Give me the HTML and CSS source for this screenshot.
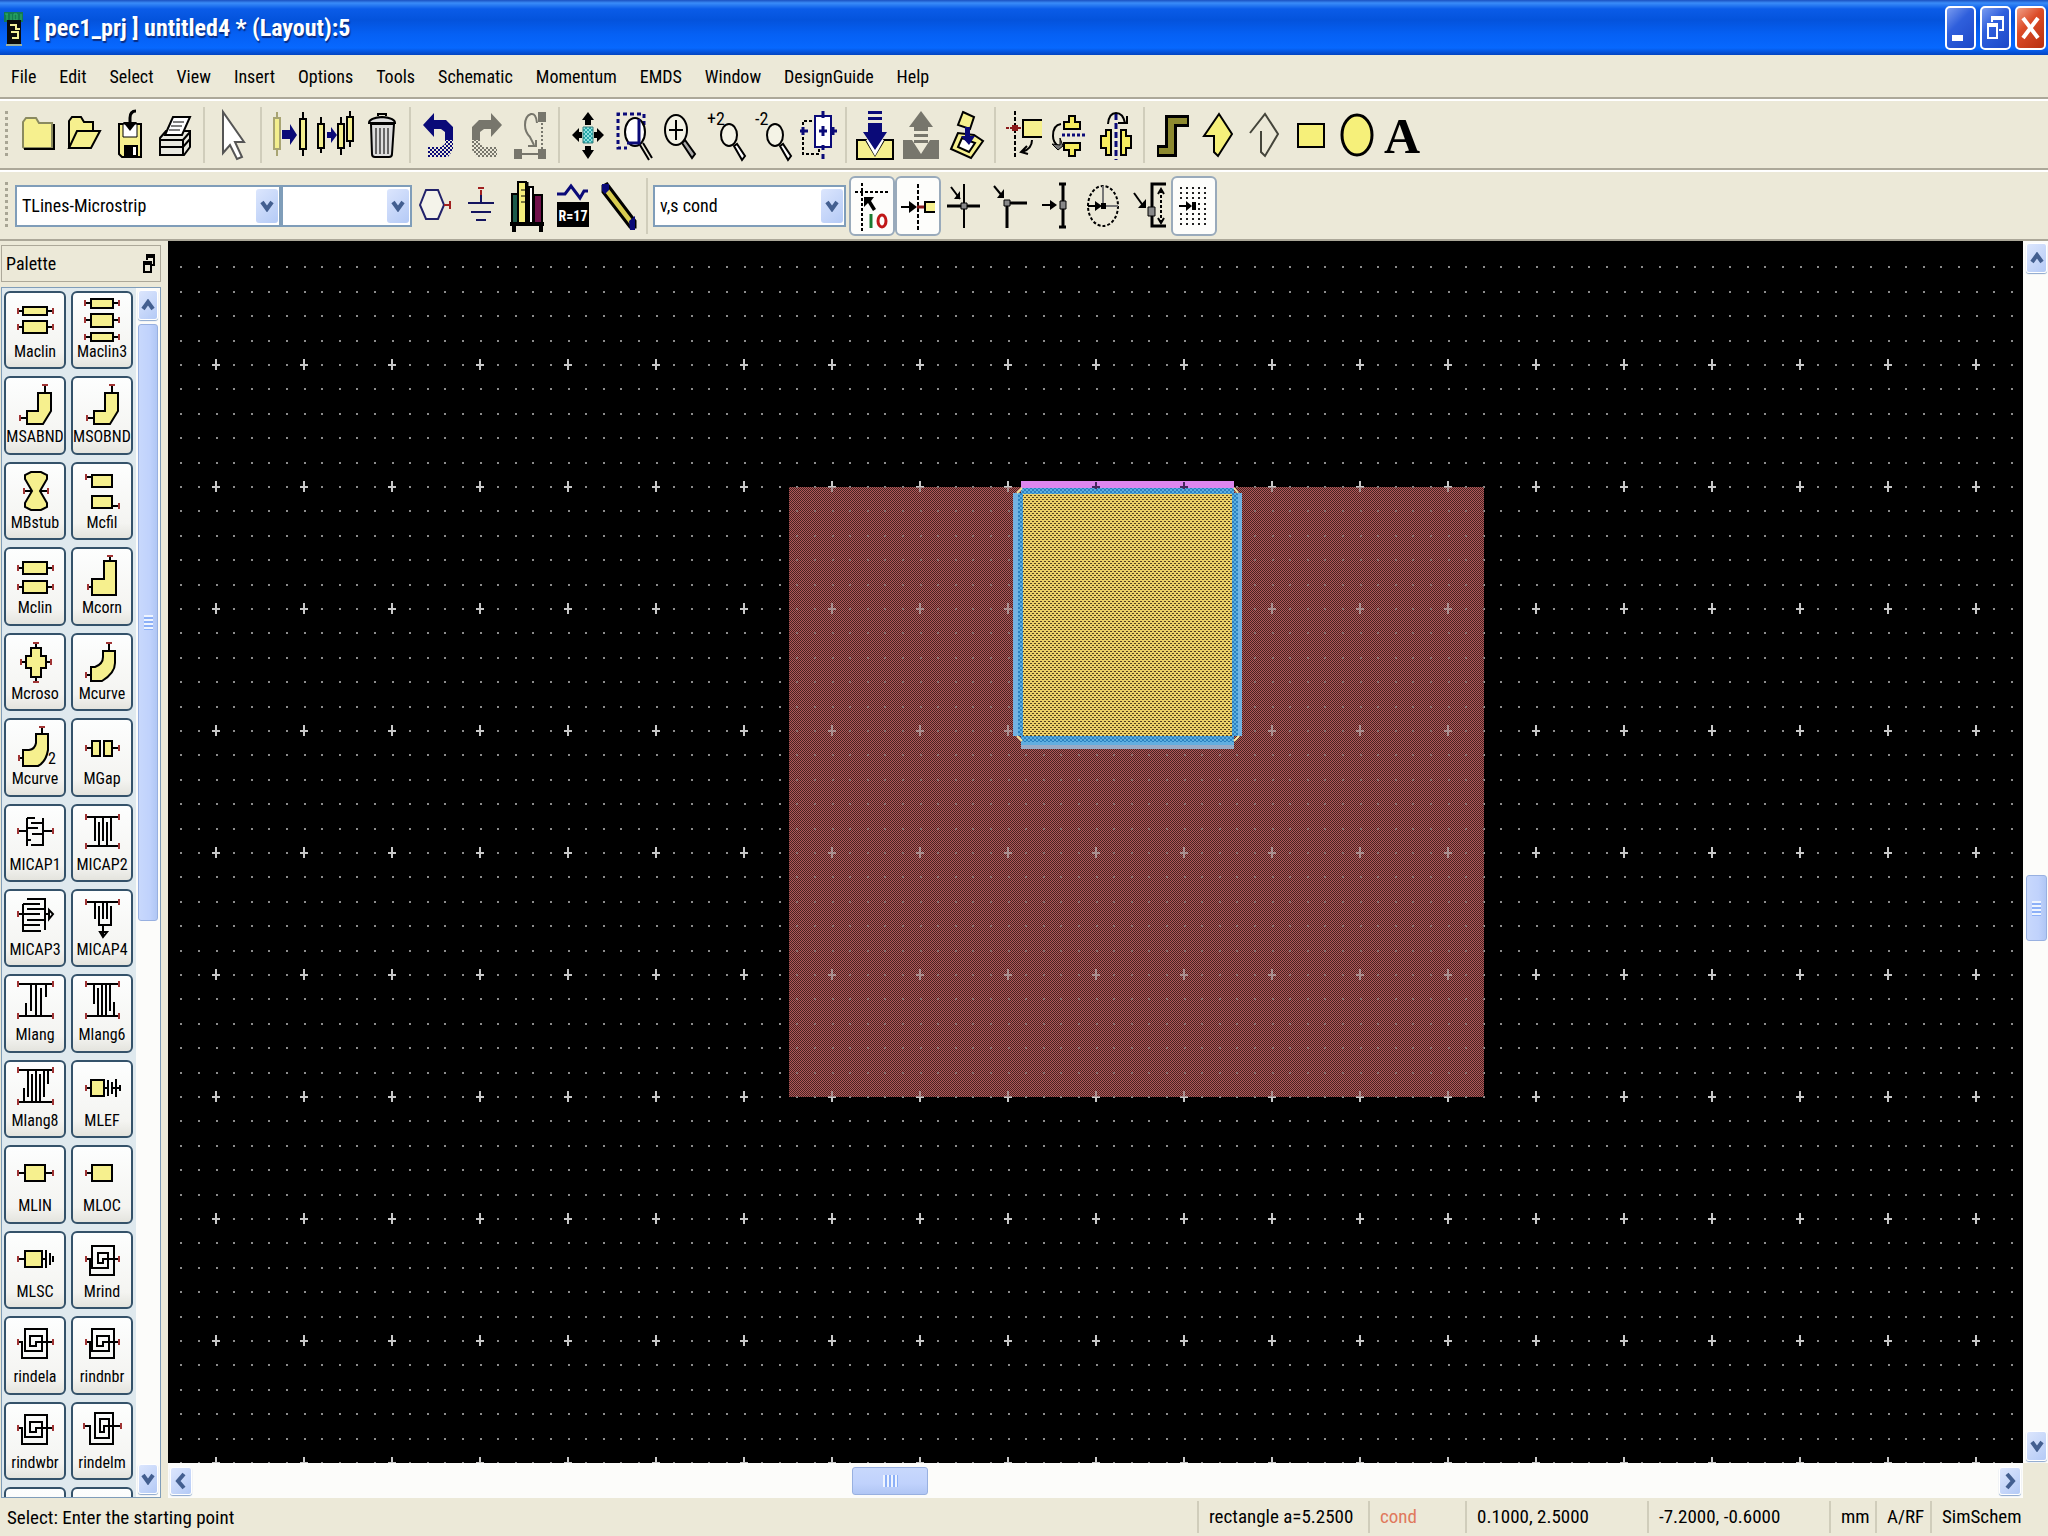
FILE: index.html
```
<!DOCTYPE html>
<html lang="en">
  <head>
    <meta charset="utf-8">
    <title>[ pec1_prj ] untitled4 * (Layout):5</title>
    <link rel="stylesheet" href="styles.css">
  </head>
  <body>
    <header class="titlebar">
      <svg class="app-icon" width="22" height="36" viewBox="0 0 22 36">
        <path d="M1 2h19v10H1z" fill="#147a50"/>
        <path d="M2 4h3M4 4v6M8 4v6M11 4h3v6h-3zM18 4v6" stroke="#2fb36a" fill="none"/>
        <path d="M4 10h14v24H4z" fill="#0a0a0a"/>
        <path d="M7 15h6v4h4M8 22h7v6H9" stroke="#f2ee9a" stroke-width="2" fill="none"/>
        <path d="M3 35h16" stroke="#9cb0a0" stroke-width="2"/>
      </svg>
      <h1 class="title">[ pec1_prj ] untitled4 * (Layout):5</h1>
      <button class="win-btn" aria-label="Minimize">
        <svg width="27" height="40" viewBox="0 0 27 40"><path d="M5 27h11v6H5z" fill="#fff"/></svg>
      </button>
      <button class="win-btn" aria-label="Restore">
        <svg width="27" height="40" viewBox="0 0 27 40"><path d="M10 14V9h11v13h-4" fill="none" stroke="#fff" stroke-width="2"/><path d="M10 10h11" stroke="#fff" stroke-width="4"/><path d="M6 17h9v13H6z" fill="none" stroke="#fff" stroke-width="2"/><path d="M5 17h11" stroke="#fff" stroke-width="4"/></svg>
      </button>
      <button class="win-btn close" aria-label="Close">
        <svg width="27" height="40" viewBox="0 0 27 40"><path d="M6 10l15 20M21 10L6 30" stroke="#fff" stroke-width="4"/></svg>
      </button>
    </header>

    <nav class="menubar">
      <a href="#">File</a>
      <a href="#">Edit</a>
      <a href="#">Select</a>
      <a href="#">View</a>
      <a href="#">Insert</a>
      <a href="#">Options</a>
      <a href="#">Tools</a>
      <a href="#">Schematic</a>
      <a href="#">Momentum</a>
      <a href="#">EMDS</a>
      <a href="#">Window</a>
      <a href="#">DesignGuide</a>
      <a href="#">Help</a>
    </nav>

    <div class="toolbar">
      <span class="grip"></span>
      <button class="tool" aria-label="New">
        <svg viewBox="0 0 46 56"><path d="M8 40V15l3-4h10l3 5h13v25H9z" fill="#f6f08e" stroke="#8a8a60" stroke-width="2"/><path d="M9 42h30V17" fill="none" stroke="#000" stroke-width="2"/></svg>
      </button>
      <button class="tool" aria-label="Open">
        <svg viewBox="0 0 46 56"><path d="M8 41V14l3-4h9l3 5h9v9" fill="#f6f08e" stroke="#000" stroke-width="2"/><path d="M8 41l8-17h23l-9 17z" fill="#f6f08e" stroke="#000" stroke-width="2"/></svg>
      </button>
      <button class="tool" aria-label="Save">
        <svg viewBox="0 0 46 56"><path d="M12 17h22v33H15l-3-3z" fill="#f6f08e" stroke="#000" stroke-width="2"/><path d="M16 17h14v13H16z" fill="#fff" stroke="#000"/><path d="M17 38h14v12H17z"/><path d="M26 40h3v8h-3z" fill="#fff"/><path d="M29 4q-6 0-6 7v6" fill="none" stroke="#000" stroke-width="3"/><path d="M16 15h14l-7 9z"/></svg>
      </button>
      <button class="tool" aria-label="Print">
        <svg viewBox="0 0 46 56"><path d="M7 31l6-7h24v16l-6 8H7z" fill="#e8e8e0" stroke="#000" stroke-width="2"/><path d="M12 28l8-18h17l-8 18z" fill="#fff" stroke="#000" stroke-width="2"/><path d="M20 15h11M18 19h11M16 23h11" stroke="#000"/><path d="M7 33h23v14M30 33l7-8M7 40h23l7-8" fill="none" stroke="#000" stroke-width="2"/></svg>
      </button>
      <span class="sep"></span>
      <button class="tool" aria-label="Select">
        <svg viewBox="0 0 46 56"><path d="M13 5v41l7-8 7 14 5-2-7-15h9z" fill="#fff" stroke="#555" stroke-width="2"/></svg>
      </button>
      <span class="sep"></span>
      <button class="tool" aria-label="Move">
        <svg viewBox="0 0 46 56"><path d="M10 5v44" stroke="#a8a472" stroke-width="2"/><path d="M7 11h6v31H7z" fill="#f3ee8e" stroke="#a8a472" stroke-width="2"/><path d="M15 23h8v-6l7 11-7 10v-6h-8z" fill="#0a0a78"/><path d="M36 5v44" stroke="#000" stroke-width="2"/><path d="M33 12h6v30h-6z" fill="#f3ee8e" stroke="#000" stroke-width="2"/></svg>
      </button>
      <button class="tool" aria-label="Copy">
        <svg viewBox="0 0 46 56"><path d="M8 10v36M28 10v38M37 4v36" stroke="#000" stroke-width="2"/><path d="M5 17h6v24H5zM25 17h6v24h-6zM34 10h6v24h-6z" fill="#f3ee8e" stroke="#000" stroke-width="2"/><path d="M14 25h4v-5l6 8-6 8v-5h-4z" fill="#0a0a78"/></svg>
      </button>
      <button class="tool" aria-label="Delete">
        <svg viewBox="0 0 46 56"><path d="M12 17l1 30q0 3 3 3h14q3 0 3-3l2-30z" fill="#ddd" stroke="#000" stroke-width="2"/><path d="M10 16q0-5 13-6 13 1 13 6z" fill="#ddd" stroke="#000" stroke-width="2"/><path d="M19 9V7h8v2" fill="none" stroke="#000" stroke-width="2"/><path d="M17 21v26M21 21v26M25 21v26M29 21v26" stroke="#666" stroke-width="2"/></svg>
      </button>
      <span class="sep"></span>
      <button class="tool" aria-label="Undo">
        <svg viewBox="0 0 46 56"><path d="M7 18L18 6v7h12l7 7v13h-8v-8l-4-3h-7v8z" fill="#0a0a78"/><path d="M29 33h8v10l-5 7H12V40h13l4-3z" fill="url(#undo-fade)"/></svg>
      </button>
      <button class="tool" aria-label="Redo">
        <svg viewBox="0 0 46 56"><path d="M40 18L29 6v7H17l-7 7v13h8v-8l4-3h7v8z" fill="#77766c"/><path d="M18 33h-8v10l5 7h20V40H22l-4-3z" fill="url(#redo-fade)"/></svg>
      </button>
      <button class="tool" aria-label="Rotate">
        <svg viewBox="0 0 46 56"><path d="M30 5h8v10h-8zM6 42h8v10H6zM30 42h8v10h-8z" fill="#77766c"/><path d="M14 47h16" stroke="#77766c" stroke-width="2"/><path d="M34 16v26" stroke="#77766c" stroke-width="2" stroke-dasharray="2 2"/><path d="M29 16q-1-10-6-9-6 2-6 11 0 7 5 12l4 8M20 39h8v-6" fill="none" stroke="#77766c" stroke-width="2"/></svg>
      </button>
      <span class="sep"></span>
      <button class="tool" aria-label="View all">
        <svg viewBox="0 0 46 56"><path d="M18 20h10v16H18z" fill="url(#teal)" stroke="#3a8080"/><path d="M23 5l6 8h-3v5h-6v-5h-3zM23 52l6-9h-3v-4h-6v4h-3zM7 28l7-7v4h3v6h-3v4zM39 28l-7-7v4h-3v6h3v4z"/></svg>
      </button>
      <button class="tool" aria-label="Zoom area">
        <svg viewBox="0 0 46 56"><path d="M33 18V7H7v34h9" fill="none" stroke="#0a0a78" stroke-width="3" stroke-dasharray="4 3"/><ellipse cx="24" cy="25" rx="10" ry="14" fill="#fff" stroke="#000" stroke-width="2"/><path d="M28 12v24H16" fill="none" stroke="#0a0a78" stroke-width="3"/><path d="M29 38l9 15M32 36l9 15" stroke="#000" stroke-width="2"/></svg>
      </button>
      <button class="tool" aria-label="Zoom in">
        <svg viewBox="0 0 46 56"><ellipse cx="19" cy="23" rx="11" ry="15" fill="#f4f3e6" stroke="#000" stroke-width="2"/><path d="M19 13v20M12 23h14" stroke="#000" stroke-width="2"/><path d="M25 36l3-3 10 14-3 4z" fill="#aaa" stroke="#000" stroke-width="2"/></svg>
      </button>
      <button class="tool" aria-label="Zoom in by 2">
        <svg viewBox="0 0 46 56"><text class="zoom-text" x="4" y="18">+2</text><ellipse cx="26" cy="28" rx="8" ry="11" fill="#f4f3e6" stroke="#000" stroke-width="2"/><path d="M31 39l3-2 8 12-3 4z" fill="#fff" stroke="#000" stroke-width="2"/></svg>
      </button>
      <button class="tool" aria-label="Zoom out by 2">
        <svg viewBox="0 0 46 56"><text class="zoom-text" x="6" y="18">-2</text><ellipse cx="26" cy="28" rx="8" ry="11" fill="#f4f3e6" stroke="#000" stroke-width="2"/><path d="M31 39l3-2 8 12-3 4z" fill="#fff" stroke="#000" stroke-width="2"/></svg>
      </button>
      <button class="tool" aria-label="Center view">
        <svg viewBox="0 0 46 56"><path d="M17 14H8v33h16v-6" fill="none" stroke="#000" stroke-width="2" stroke-dasharray="3 2"/><path d="M20 9h16v31H20z" fill="#fff" stroke="#0a0a78" stroke-width="2"/><path d="M5 24h8M36 24h6M28 4v7M28 38v5M28 47v5" stroke="#0a0a78" stroke-width="3"/><path d="M24 24h8M28 19v10M8 20v8M38 20v8" stroke="#0a0a78" stroke-width="3"/></svg>
      </button>
      <span class="sep"></span>
      <button class="tool" aria-label="Push into hierarchy">
        <svg viewBox="0 0 46 56"><path d="M5 33h9l9 15 9-15h9v19H5z" fill="#f6f08e" stroke="#000" stroke-width="2"/><path d="M14 33l9 16 9-16z" fill="#fff"/><path d="M16 4h14v3H16zM16 10h14v3H16zM16 16h14v9h5L23 43 11 25h5z" fill="#0a0a78"/></svg>
      </button>
      <button class="tool" aria-label="Pop out of hierarchy">
        <svg viewBox="0 0 46 56"><path d="M5 33h9l9 14 9-14h9v19H5z" fill="#77766c"/><path d="M23 4l12 16h-5v4H16v-4h-5zM16 27h14v3H16zM16 33h14v3H16z" fill="#77766c"/></svg>
      </button>
      <button class="tool" aria-label="Insert layer">
        <svg viewBox="0 0 46 56"><path d="M14 26l-7 16 20 9 12-17-9-6z" fill="#f6f08e" stroke="#000" stroke-width="2"/><path d="M19 5l11 5-4 12-12-4z" fill="#f6f08e" stroke="#000" stroke-width="2"/><path d="M18 31l-4 9 11 5 6-9z" fill="#fff" stroke="#000" stroke-width="2"/><path d="M21 20h5v9h5l-6 9-8-9h4z" fill="#0a0a78"/></svg>
      </button>
      <span class="sep"></span>
      <button class="tool" aria-label="Mirror at origin">
        <svg viewBox="0 0 46 56"><path d="M41 13H22v17h19" fill="#f6f08e" stroke="#000" stroke-width="2"/><path d="M14 4v48" stroke="#000" stroke-width="2" stroke-dasharray="4 2"/><path d="M5 21h15" stroke="#8b1a1a" stroke-width="2" stroke-dasharray="3 1"/><path d="M11 18h6v6h-6z" fill="#8b1a1a"/><path d="M31 33q0 9-10 12M26 39l-6 6 7 2" fill="none" stroke="#000" stroke-width="2"/></svg>
      </button>
      <button class="tool" aria-label="Mirror about X">
        <svg viewBox="0 0 46 56"><path d="M22 9h6v6h5v7H17v-7h5zM17 36h16v7h-5v6h-6v-6h-5z" fill="#f6ec5e" stroke="#000" stroke-width="2"/><path d="M15 28h24" stroke="#0a0a78" stroke-width="3" stroke-dasharray="3 2"/><path d="M14 17q-8 1-8 12 0 6 5 10" fill="none" stroke="#000" stroke-width="2"/><path d="M5 37l8 1V31l3 8-5 4z" fill="#777" stroke="#000"/></svg>
      </button>
      <button class="tool" aria-label="Mirror about Y">
        <svg viewBox="0 0 46 56"><path d="M13 23h5v25h-5v-7H8V29h5zM28 23h5v6h5v12h-5v7h-5z" fill="#f6ec5e" stroke="#000" stroke-width="2"/><path d="M23 7v46" stroke="#0a0a78" stroke-width="3" stroke-dasharray="6 3"/><path d="M15 17q1-11 8-11t9 10M25 16h9V9" fill="none" stroke="#000" stroke-width="2"/></svg>
      </button>
      <span class="sep"></span>
      <button class="tool" aria-label="Path">
        <svg viewBox="0 0 46 56"><path d="M7 44h14V14h18" fill="none" stroke="#000" stroke-width="12"/><path d="M9 44h12V14h16" fill="none" stroke="#8d8a30" stroke-width="6"/></svg>
      </button>
      <button class="tool" aria-label="Polygon">
        <svg viewBox="0 0 46 56"><path d="M23 7l13 20-14 22-4-4V29H8z" fill="#f6f07a" stroke="#000" stroke-width="2"/></svg>
      </button>
      <button class="tool" aria-label="Polyline">
        <svg viewBox="0 0 46 56"><path d="M8 26L23 7l13 20-13 22-4-4V24" fill="none" stroke="#44443a" stroke-width="2"/></svg>
      </button>
      <button class="tool" aria-label="Rectangle">
        <svg viewBox="0 0 46 56"><path d="M10 17h26v23H10z" fill="#f6f07a" stroke="#000" stroke-width="2"/></svg>
      </button>
      <button class="tool" aria-label="Circle">
        <svg viewBox="0 0 46 56"><ellipse cx="23" cy="28" rx="15" ry="20" fill="#f6f07a" stroke="#000" stroke-width="3"/></svg>
      </button>
      <button class="tool" aria-label="Text">
        <svg viewBox="0 0 46 56"><text class="big-a" x="22" y="46">A</text></svg>
      </button>
    </div>

    <div class="toolbar">
      <span class="grip"></span>
      <label class="combo wide">
        <select aria-label="Component library"><option>TLines-Microstrip</option></select>
        <span class="arrow"><svg width="14" height="12" viewBox="0 0 14 12"><path d="M2 2l5 7 5-7" fill="none" stroke="#435f90" stroke-width="4"/></svg></span>
      </label>
      <label class="combo narrow">
        <select aria-label="Component history"><option></option></select>
        <span class="arrow"><svg width="14" height="12" viewBox="0 0 14 12"><path d="M2 2l5 7 5-7" fill="none" stroke="#435f90" stroke-width="4"/></svg></span>
      </label>
      <button class="tool" aria-label="Port">
        <svg viewBox="0 0 46 56"><path d="M8 27l6-15h12l6 15-6 14H14z" fill="#f4f3ea" stroke="#22226a" stroke-width="2"/><path d="M32 27h6M38 23v8" stroke="#a02020" stroke-width="2"/></svg>
      </button>
      <button class="tool" aria-label="Ground">
        <svg viewBox="0 0 46 56"><path d="M23 12v13" stroke="#a02020" stroke-width="2"/><path d="M20 10h6" stroke="#a02020" stroke-width="2"/><path d="M10 25h26M13 34h20M18 42h10" stroke="#14145e" stroke-width="2"/><path d="M23 17v8" stroke="#14145e" stroke-width="2"/></svg>
      </button>
      <button class="tool" aria-label="Component library list">
        <svg viewBox="0 0 46 56"><path d="M8 16h6v30H8z" fill="#1c5a4a" stroke="#000" stroke-width="2"/><path d="M14 4h8v42h-8z" fill="#f4ee7c" stroke="#000" stroke-width="2"/><path d="M17 12h5M17 18h5M17 24h5" stroke="#000"/><path d="M23 4v42" stroke="#000" stroke-width="3"/><path d="M25 9h4v37h-4z" fill="#fff" stroke="#000" stroke-width="2"/><path d="M30 17h8v29h-8z" fill="#70104a" stroke="#000" stroke-width="2"/><path d="M6 46h34M10 47v7M37 47v7" stroke="#000" stroke-width="4"/></svg>
      </button>
      <button class="tool" aria-label="Variable equation">
        <svg viewBox="0 0 46 56"><path d="M7 16h8l6-8 9 12 4-7h4" fill="none" stroke="#0a0a78" stroke-width="3"/><path d="M7 24h32v25H7z"/><text class="eqn-text" x="23" y="43">R=17</text></svg>
      </button>
      <button class="tool" aria-label="Edit">
        <svg viewBox="0 0 46 56"><path d="M7 8l4-2 28 37v6h-5L7 14z" fill="#d8cc50" stroke="#000" stroke-width="3"/><path d="M6 6h7v6l-4 4-3-3zM33 43l6-5v14h-5z" fill="#0a0a78"/></svg>
      </button>
      <span class="sep"></span>
      <label class="combo layer">
        <select aria-label="Layer"><option>v,s cond</option></select>
        <span class="arrow"><svg width="14" height="12" viewBox="0 0 14 12"><path d="M2 2l5 7 5-7" fill="none" stroke="#435f90" stroke-width="4"/></svg></span>
      </label>
      <button class="tool on" aria-label="Snap enabled" aria-pressed="true">
        <svg viewBox="2 0 42 56"><path d="M13 5v48M6 14h34" stroke="#000" stroke-width="2" stroke-dasharray="3 2"/><path d="M15 19h10l-3 4 5 8-3 2-5-8-4 4z"/><path d="M22 36v14" stroke="#1a7a30" stroke-width="3"/><ellipse cx="33" cy="43" rx="4" ry="6" fill="none" stroke="#c01818" stroke-width="3"/></svg>
      </button>
      <button class="tool on" aria-label="Pin snap" aria-pressed="true">
        <svg viewBox="2 0 42 56"><path d="M23 6v46" stroke="#000" stroke-width="2" stroke-dasharray="4 2"/><path d="M6 29h10" stroke="#000" stroke-width="2"/><path d="M14 23l8 6-8 6z"/><path d="M22 29h8" stroke="#8b1a1a" stroke-width="3"/><path d="M40 24H30v10h10" fill="#f6f08e" stroke="#000" stroke-width="2"/></svg>
      </button>
      <button class="tool" aria-label="Intersection snap">
        <svg viewBox="0 0 46 56"><path d="M6 28h33" stroke="#000" stroke-width="3"/><path d="M23 6v44M10 9l9 12" stroke="#000" stroke-width="2"/><path d="M13 21h6v-8z"/><path d="M20 25h6v6h-6z" fill="#888" stroke="#000"/></svg>
      </button>
      <button class="tool" aria-label="Vertex snap">
        <svg viewBox="0 0 46 56"><path d="M20 50V25h20" fill="none" stroke="#000" stroke-width="3"/><path d="M7 8l9 11" stroke="#000" stroke-width="2"/><path d="M10 20h7v-9z"/><path d="M17 22h6v6h-6z" fill="#888" stroke="#000"/></svg>
      </button>
      <button class="tool" aria-label="Midpoint snap">
        <svg viewBox="0 0 46 56"><path d="M30 6v43M26 6h7M26 49h7" stroke="#000" stroke-width="3"/><path d="M9 27h12" stroke="#000" stroke-width="2"/><path d="M17 22l7 5-7 5z"/><path d="M27 23h6v8h-6z" fill="#888" stroke="#000"/></svg>
      </button>
      <button class="tool" aria-label="Center snap">
        <svg viewBox="0 0 46 56"><ellipse cx="24" cy="28" rx="15" ry="20" fill="none" stroke="#000" stroke-width="2" stroke-dasharray="3 2"/><path d="M24 8v20h15" fill="none" stroke="#777" stroke-width="2"/><path d="M9 28h9" stroke="#000" stroke-width="2"/><path d="M16 23l7 5-7 5zM22 25h5v6h-5z"/></svg>
      </button>
      <button class="tool" aria-label="Edge snap">
        <svg viewBox="0 0 46 56"><path d="M41 6H27v42h14" fill="none" stroke="#000" stroke-width="3"/><path d="M36 12v32" stroke="#000" stroke-width="2" stroke-dasharray="3 2"/><path d="M33 16l3-5 3 5M33 40l3 5 3-5" fill="none" stroke="#000" stroke-width="2"/><path d="M9 15l10 14" stroke="#000" stroke-width="2"/><path d="M13 30h8v-9z"/><path d="M23 29h7v9h-7z" fill="#888" stroke="#000"/></svg>
      </button>
      <button class="tool on" aria-label="Grid snap" aria-pressed="true">
        <svg viewBox="2 0 42 56"><path d="M9 10h30M9 15h30M9 20h30M27 26h12M27 31h12M9 36h30M9 41h30M9 46h30" stroke="#222" stroke-width="2" stroke-dasharray="2 4"/><path d="M8 28h9" stroke="#000" stroke-width="2"/><path d="M15 23l6 5-6 5zM21 24h4v8h-4z"/></svg>
      </button>
    </div>

    <main class="workspace">
      <aside class="palette">
        <div class="palette-head">
          <span>Palette</span>
          <button class="float-btn" aria-label="Undock palette">
            <svg width="14" height="20" viewBox="0 0 14 20"><path d="M5 6V2h7v9H9" fill="none" stroke="#000" stroke-width="2"/><path d="M4 2h9M1 9h9" stroke="#000" stroke-width="4"/><path d="M2 9h7v9H2z" fill="none" stroke="#000" stroke-width="2"/></svg>
          </button>
        </div>
        <div class="palette-body">
          <div class="parts">
            <button class="part"><svg viewBox="2 2 58 50"><path class="k" d="M14 20h5M43 20h6M14 36h5M43 36h6"/><path class="y" d="M19 16h24v8H19zM19 30h24v12H19z"/><path class="r" d="M14 17v6M49 17v6M14 33v6M49 33v6"/></svg><span>Maclin</span></button>
            <button class="part"><svg viewBox="2 2 58 50"><path class="k" d="M14 12h6M42 12h6M14 29h6M42 29h6M14 46h6M42 46h6"/><path class="y" d="M20 8h22v9H20zM20 23h22v13H20zM20 42h22v8H20z"/><path class="r" d="M14 9v6M48 9v6M14 26v6M48 26v6M14 43v6M48 43v6"/></svg><span>Maclin3</span></button>
            <button class="part"><svg viewBox="2 2 58 50"><path class="k" d="M41 9v8M16 42h7"/><path class="y" d="M34 17h13v18l-8 13H23V35h11z"/><path class="r" d="M38 9h6M16 39v6"/></svg><span>MSABND</span></button>
            <button class="part"><svg viewBox="2 2 58 50"><path class="k" d="M41 9v8M16 42h7"/><path class="y" d="M34 17h13v18l-8 13H23V35h11z"/><path class="r" d="M38 9h6M16 39v6"/></svg><span>MSOBND</span></button>
            <button class="part"><svg viewBox="2 2 58 50"><path class="k" d="M20 29h9M35 29h9"/><path class="y" d="M28 29L21 17v-4l6-3h10l6 3v4l-7 12 7 12v4l-6 3H27l-6-3v-4z"/><path class="r" d="M20 26v6M44 26v6"/></svg><span>MBstub</span></button>
            <button class="part"><svg viewBox="2 2 58 50"><path class="k" d="M15 15h6M41 44h7"/><path class="y" d="M21 13h20v12H21zM21 34h20v12H21z"/><path class="r" d="M15 12v6M48 41v6"/></svg><span>Mcfil</span></button>
            <button class="part"><svg viewBox="2 2 58 50"><path class="k" d="M14 21h5M43 21h6M14 40h5M43 40h6"/><path class="y" d="M19 15h24v12H19zM19 34h24v12H19z"/><path class="r" d="M14 18v6M49 18v6M14 37v6M49 37v6"/></svg><span>Mclin</span></button>
            <button class="part"><svg viewBox="2 2 58 50"><path class="k" d="M39 9v5M17 40h4"/><path class="y" d="M33 14h12v34H21V32h12z"/><path class="r" d="M36 9h6M17 37v6"/></svg><span>Mcorn</span></button>
            <button class="part"><svg viewBox="2 2 58 50"><path class="k" d="M32 10v5M32 44v5M17 29h5M42 29h5"/><path class="y" d="M27 15h10v8h5v12h-5v9H27v-9h-5V23h5z"/><path class="r" d="M29 10h6M29 49h6M17 26v6M47 26v6"/></svg><span>Mcroso</span></button>
            <button class="part"><svg viewBox="2 2 58 50"><path class="k" d="M38 10v8M15 42h5"/><path class="y" d="M32 18h12v12q0 10-13 18H20V34h4q8-3 8-10z"/><path class="r" d="M35 10h6M15 39v6"/></svg><span>Mcurve</span></button>
            <button class="part"><svg viewBox="2 2 58 50"><path class="k" d="M38 9v7M15 40h4"/><path class="y" d="M32 16h12v16q-2 12-10 16H19V32h6q6-1 7-7z"/><path class="r" d="M35 9h6M15 37v6"/><text class="two" x="44" y="46">2</text></svg><span>Mcurve</span></button>
            <button class="part"><svg viewBox="2 2 58 50"><path class="k" d="M15 30h6M41 30h7"/><path class="y" d="M21 23h8v15h-8zM33 23h8v15h-8z"/><path class="r" d="M15 27v6M48 27v6"/></svg><span>MGap</span></button>
            <button class="part"><svg viewBox="2 2 58 50"><path class="k" d="M14 27h9M39 27h10M23 14v28M39 14v28M23 14h8M39 19H27M23 24h11M39 30H28M23 36h4M39 41H27"/><path class="r" d="M14 24v6M49 24v6"/></svg><span>MICAP1</span></button>
            <button class="part"><svg viewBox="2 2 58 50"><path class="k" d="M15 13h33M15 42h33M24 13v24M28 18v24M32 13v24M36 18v24M40 13v24"/><path class="r" d="M15 10v6M48 10v6M15 39v6M48 39v6"/></svg><span>MICAP2</span></button>
            <button class="part"><svg viewBox="2 2 58 50"><path class="k" d="M14 25h5M19 15v27h18M41 41V10H23M19 15h17M41 20H23M19 25h17M41 31H23M19 36h17M41 25h4M45 21v9l4-5z"/><path class="r" d="M14 22v6"/></svg><span>MICAP3</span></button>
            <button class="part"><svg viewBox="2 2 58 50"><path class="k" d="M15 13h33M24 13v17M28 17v19h12V17M32 13v17M36 13v17M32 36v12M29 43h7l-4 5z"/><path class="r" d="M15 10v6M48 10v6"/></svg><span>MICAP4</span></button>
            <button class="part"><svg viewBox="2 2 58 50"><path class="k" d="M14 10h35M14 42h35M27 10v27M32 10v32M37 42V14M42 10v13M22 29v13"/><path class="r" d="M14 7v6M49 7v6M14 39v6M49 39v6"/></svg><span>Mlang</span></button>
            <button class="part"><svg viewBox="2 2 58 50"><path class="k" d="M15 10h33M15 42h33M23 10v20M27 14v28M31 10v32M35 10v32M39 10v27M43 28v14"/><path class="r" d="M15 7v6M48 7v6M15 39v6M48 39v6"/></svg><span>Mlang6</span></button>
            <button class="part"><svg viewBox="2 2 58 50"><path class="k" d="M14 10h35M14 42h35M20 28v14M24 10v27M28 14v28M32 10v32M36 14v28M40 10v27M44 10v14"/><path class="r" d="M14 7v6M49 7v6M14 39v6M49 39v6"/></svg><span>Mlang8</span></button>
            <button class="part"><svg viewBox="2 2 58 50"><path class="k" d="M15 28h5M33 28h4M37 20v16M41 22v12M45 19v18M49 25v6M41 28h8"/><path class="y" d="M20 20h13v16H20z"/><path class="r" d="M15 25v6"/></svg><span>MLEF</span></button>
            <button class="part"><svg viewBox="2 2 58 50"><path class="k" d="M14 28h7M41 28h8"/><path class="y" d="M21 20h20v16H21z"/><path class="r" d="M14 25v6M49 25v6"/></svg><span>MLIN</span></button>
            <button class="part"><svg viewBox="2 2 58 50"><path class="k" d="M15 28h6"/><path class="y" d="M21 20h20v16H21z"/><path class="r" d="M15 25v6"/></svg><span>MLOC</span></button>
            <button class="part"><svg viewBox="2 2 58 50"><path class="k" d="M14 28h7M38 28h4M42 19v18M46 22v12M49 25v6"/><path class="y" d="M21 20h17v16H21z"/><path class="r" d="M14 25v6"/></svg><span>MLSC</span></button>
            <button class="part"><svg viewBox="2 2 58 50"><path class="k" d="M15 28h4v16h24V15H21v22h16V22H27v10h5v-4h16"/><path class="r" d="M15 25v6M48 25v6"/></svg><span>Mrind</span></button>
            <button class="part"><svg viewBox="2 2 58 50"><path class="k" d="M14 26h4v16h25V13H21v22h17V20H26v10h6v-4h17"/><path class="r" d="M14 23v6M49 23v6"/></svg><span>rindela</span></button>
            <button class="part"><svg viewBox="2 2 58 50"><path class="k" d="M15 26h4v16h24V13H21v22h17V20H26v10h6v-4h16"/><path class="r" d="M15 23v6M48 23v6"/></svg><span>rindnbr</span></button>
            <button class="part"><svg viewBox="2 2 58 50"><path class="k" d="M14 26h4v16h25V13H21v22h17V20H26v10h6v-4h17"/><path class="r" d="M14 23v6M49 23v6"/></svg><span>rindwbr</span></button>
            <button class="part"><svg viewBox="2 2 58 50"><path class="k" d="M13 24h6v18h23V11H24v25h14V17H29v13h4v-6h17"/><path class="r" d="M13 21v6M50 21v6"/></svg><span>rindelm</span></button>
            <button class="part" aria-label="Next part"></button>
            <button class="part" aria-label="Next part"></button>
          </div>
          <div class="scroll vertical palette-scroll">
            <button aria-label="Scroll palette up"><svg width="14" height="12" viewBox="0 0 14 12"><path d="M2 10l5-7 5 7" fill="none" stroke="#435f90" stroke-width="4"/></svg></button>
            <div class="track"><div class="thumb"></div></div>
            <button aria-label="Scroll palette down"><svg width="14" height="12" viewBox="0 0 14 12"><path d="M2 2l5 7 5-7" fill="none" stroke="#435f90" stroke-width="4"/></svg></button>
          </div>
        </div>
      </aside>

      <section class="view">
        <svg class="canvas" role="img" aria-label="Layout drawing">
          <defs>
            <pattern id="grid" x="4" y="1" width="88" height="122" patternUnits="userSpaceOnUse">
              <path d="M8 0h2v2H8zM26 0h2v2h-2zM44 0h2v2h-2zM61 0h2v2h-2zM79 0h2v2h-2zM8 24h2v2H8zM26 24h2v2h-2zM44 24h2v2h-2zM61 24h2v2h-2zM79 24h2v2h-2zM8 49h2v2H8zM26 49h2v2h-2zM44 49h2v2h-2zM61 49h2v2h-2zM79 49h2v2h-2zM8 73h2v2H8zM26 73h2v2h-2zM44 73h2v2h-2zM61 73h2v2h-2zM79 73h2v2h-2zM8 98h2v2H8zM26 98h2v2h-2zM44 98h2v2h-2zM61 98h2v2h-2zM79 98h2v2h-2z" fill="#8c8c8c"/>
              <path d="M44 0v6M44 117v5M40 1h8" stroke="#c8c8c8" stroke-width="2"/>
            </pattern>
            <pattern id="ground" width="2" height="2" patternUnits="userSpaceOnUse">
              <path d="M0 0h2v2H0z" fill="#4a2222"/>
              <path d="M0 0h1v1H0zM1 1h1v1H1z" fill="#b05858"/>
            </pattern>
            <pattern id="patch" width="4" height="4" patternUnits="userSpaceOnUse">
              <path d="M0 0h4v4H0z" fill="#ecd068"/>
              <path d="M0 0h2v1H0zM2 2h2v1H2z" fill="#54421e"/>
            </pattern>
            <pattern id="edge" width="4" height="4" patternUnits="userSpaceOnUse">
              <path d="M0 0h4v4H0z" fill="#5cb0e0"/>
              <path d="M0 0h2v2H0zM2 2h2v2H2z" fill="#2c80c0"/>
            </pattern>
            <pattern id="undo-fade" width="4" height="4" patternUnits="userSpaceOnUse"><path d="M0 0h2v2H0zM2 2h2v2H2z" fill="#0a0a78"/></pattern>
            <pattern id="redo-fade" width="4" height="4" patternUnits="userSpaceOnUse"><path d="M0 0h2v2H0zM2 2h2v2H2z" fill="#77766c"/></pattern>
            <pattern id="teal" width="4" height="4" patternUnits="userSpaceOnUse"><path d="M0 0h4v4H0z" fill="#8fe0e0"/><path d="M0 0h2v2H0zM2 2h2v2H2z" fill="#28a8a8"/></pattern>
          </defs>
          <rect width="100%" height="100%" fill="#000"/>
          <rect y="10" width="100%" height="100%" fill="url(#grid)"/>
          <rect x="621" y="246" width="695" height="610" fill="url(#ground)"/>
          <rect x="621" y="246" width="695" height="610" fill="url(#grid)" opacity="0.6"/>
          <rect x="853" y="252" width="213" height="245" fill="url(#patch)"/>
          <path d="M853 240h213v8H853z" fill="#dc86ee"/>
          <path d="M853 247h213v6H853zM850 252h5v243h-5zM1064 252h6v243h-6zM853 495h213v6H853z" fill="url(#edge)"/>
          <path d="M845 252h5v243h-5zM1070 252h4v243h-4z" fill="#72b2e2"/>
          <path d="M853 501h213v3H853z" fill="#62aee0"/>
          <path d="M853 504h213v4H853z" fill="#98aac6"/>
          <path d="M849 252l5-5M1066 247l4 5M849 495l5 5M1066 500l5-5" stroke="#f4e6a0" stroke-width="2"/>
          <path d="M928 241v7M924 246h8M1016 241v7M1012 246h8" stroke="#46285e" stroke-width="2"/>
        </svg>
        <div class="scroll vertical view-v">
          <button aria-label="Scroll up"><svg width="14" height="12" viewBox="0 0 14 12"><path d="M2 10l5-7 5 7" fill="none" stroke="#435f90" stroke-width="4"/></svg></button>
          <div class="track"><div class="thumb"></div></div>
          <button aria-label="Scroll down"><svg width="14" height="12" viewBox="0 0 14 12"><path d="M2 2l5 7 5-7" fill="none" stroke="#435f90" stroke-width="4"/></svg></button>
        </div>
        <div class="scroll horizontal view-h">
          <button aria-label="Scroll left"><svg width="12" height="18" viewBox="0 0 12 18"><path d="M9 2L3 9l6 7" fill="none" stroke="#435f90" stroke-width="4"/></svg></button>
          <div class="track"><div class="thumb"></div></div>
          <button aria-label="Scroll right"><svg width="12" height="18" viewBox="0 0 12 18"><path d="M3 2l6 7-6 7" fill="none" stroke="#435f90" stroke-width="4"/></svg></button>
        </div>
      </section>
    </main>

    <footer class="statusbar">
      <span class="prompt">Select: Enter the starting point</span>
      <span class="cell shape">rectangle a=5.2500</span>
      <span class="cell layer-name">cond</span>
      <span class="cell coords">0.1000, 2.5000</span>
      <span class="cell coords">-7.2000, -0.6000</span>
      <span class="cell unit">mm</span>
      <span class="cell band">A/RF</span>
      <span class="cell mode">SimSchem</span>
    </footer>
  </body>
</html>
```
FILE: styles.css
```
* {
  box-sizing: border-box;
}
body {
  margin: 0;
  height: 100vh;
  display: flex;
  flex-direction: column;
  overflow: hidden;
  background: #ece9d8;
  color: #000;
  font-family: "Roboto Condensed", Roboto, sans-serif;
  font-size: 18px;
}
button {
  padding: 0;
  border: 0;
  background: none;
  font: inherit;
  color: inherit;
}
svg {
  display: block;
}

/* title bar */
.titlebar {
  flex: none;
  height: 55px;
  display: flex;
  align-items: center;
  gap: 4px;
  padding: 0 2px 0 3px;
  background: linear-gradient(#1a50c0 0, #3a8cf8 3px, #0a5ce8 9px, #0453dc 20px, #0560f4 34px, #0768ff 48px, #0344c0 55px);
}
.title {
  flex: 1;
  margin: 0 0 0 4px;
  color: #fff;
  font-size: 24px;
  font-weight: bold;
  line-height: 32px;
  text-shadow: 1px 2px 1px #0a2c80;
}
.win-btn {
  width: 31px;
  height: 44px;
  border: 2px solid #fff;
  border-radius: 5px;
  background: linear-gradient(135deg, #7a9cf0, #2f5fdc 40%, #1c48c8);
}
.win-btn.close {
  background: linear-gradient(135deg, #f0a088, #dc4c28 40%, #b8300e);
}

/* menu */
.menubar {
  flex: none;
  height: 44px;
  display: flex;
  align-items: center;
  border-bottom: 2px solid #aca899;
}
.menubar a {
  padding: 0 12px 0 11px;
  color: #000;
  text-decoration: none;
}

/* toolbars */
.toolbar {
  flex: none;
  height: 71px;
  display: flex;
  align-items: center;
  padding-left: 5px;
  border-top: 2px solid #fff;
  border-bottom: 2px solid #aca899;
}
.grip {
  width: 4px;
  height: 48px;
  margin-right: 6px;
  background: repeating-linear-gradient(#a8a594 0, #a8a594 3px, transparent 3px, transparent 6px);
  background-size: 3px 100%;
  background-repeat: no-repeat;
}
.tool {
  flex: none;
  width: 46px;
  height: 60px;
}
.tool svg {
  width: 46px;
  height: 56px;
  margin: auto;
}
.tool.on {
  border: 2px solid #9ab;
  border-radius: 6px;
  background: #fdfdfb;
}
.tool.on svg {
  width: 42px;
}
.sep {
  width: 2px;
  height: 56px;
  margin: 0 5px 0 4px;
  background: #d0cdbb;
}
.zoom-text {
  font: 18px "Roboto Condensed", Roboto, sans-serif;
}
.eqn-text {
  font: bold 14px "Roboto Condensed", Roboto, sans-serif;
  fill: #fff;
  text-anchor: middle;
}
.big-a {
  font: bold 50px/50px "Liberation Serif", serif;
  text-anchor: middle;
}
.combo {
  position: relative;
  flex: none;
  height: 42px;
}
.combo select {
  appearance: none;
  width: 100%;
  height: 100%;
  padding: 0 28px 0 5px;
  border: 2px solid #7f9db9;
  border-radius: 0;
  background: #fff;
  color: #000;
  font: inherit;
}
.combo .arrow {
  position: absolute;
  top: 4px;
  right: 3px;
  bottom: 4px;
  width: 22px;
  display: flex;
  align-items: center;
  justify-content: center;
  border-radius: 3px;
  background: linear-gradient(135deg, #dce6fd, #b4caf6);
  pointer-events: none;
}
.combo.wide {
  width: 266px;
}
.combo.narrow {
  width: 131px;
}
.combo.layer {
  width: 193px;
  margin-right: 3px;
}

/* workspace */
.workspace {
  flex: 1;
  min-height: 0;
  display: flex;
}
.palette {
  width: 168px;
  flex: none;
  display: flex;
  flex-direction: column;
  gap: 5px;
  padding: 4px 7px 0 1px;
}
.palette-head {
  height: 37px;
  flex: none;
  display: flex;
  align-items: center;
  justify-content: space-between;
  padding: 0 4px;
  border: 1px solid #aca899;
}
.palette-body {
  flex: 1;
  min-height: 0;
  display: flex;
  border: 1px solid #7f9db9;
  background: #dfe9ee;
}
.parts {
  flex: 1;
  display: grid;
  grid-template-columns: 62px 62px;
  grid-template-rows: repeat(14, 1fr) 10px;
  gap: 7px 5px;
  padding: 3px 2px 0;
  overflow: hidden;
}
.part {
  min-height: 78px;
  display: flex;
  flex-direction: column;
  align-items: center;
  border: 2px solid #34526a;
  border-radius: 6px;
  background: linear-gradient(#fdfefe, #f4f4f1 80%, #e4e4de);
  font-size: 16px;
  line-height: 18px;
}
.part svg {
  width: 58px;
  height: 50px;
}
.k,
.y,
.r {
  fill: none;
  stroke: #000;
  stroke-width: 2;
}
.y {
  fill: #f6f08e;
}
.r {
  stroke: #a03434;
}
.two {
  font-size: 16px;
}

/* scrollbars */
.scroll {
  display: flex;
  background: #fcfcfa;
}
.scroll.vertical {
  flex-direction: column;
}
.scroll button {
  flex: none;
  display: flex;
  align-items: center;
  justify-content: center;
  border: 1px solid #fff;
  border-radius: 3px;
  background: linear-gradient(135deg, #dce6fd, #b4caf6);
  box-shadow: 0 1px 1px #8aa6cc;
}
.scroll.vertical button {
  height: 30px;
}
.scroll.horizontal button {
  width: 22px;
}
.track {
  flex: 1;
  display: grid;
}
.thumb {
  border: 1px solid #98b0e0;
  border-radius: 3px;
  background: linear-gradient(90deg, #c8d8fc, #c0d2fc 60%, #b0c6f4);
  display: grid;
  place-items: center;
}
.thumb::after {
  content: "";
  width: 9px;
  height: 15px;
  background: repeating-linear-gradient(#eef4fe 0, #eef4fe 2px, #8cb0f8 2px, #8cb0f8 4px);
}
.palette-scroll {
  width: 24px;
  padding: 2px 2px 3px;
}
.palette-scroll .track {
  grid-template-rows: 594fr 540fr;
  padding-top: 4px;
}
.view {
  flex: 1;
  min-width: 0;
  display: grid;
  grid-template-columns: 1fr 25px;
  grid-template-rows: 1fr 35px;
}
.canvas {
  width: 100%;
  height: 100%;
}
.view-v {
  padding: 2px 1px 2px 3px;
}
.view-v .track {
  grid-template-rows: 602fr 66px 490fr;
}
.view-v .thumb {
  grid-row: 2;
}
.view-h {
  padding: 4px 2px 3px;
}
.view-h .track {
  grid-template-columns: 661fr 76px 1072fr;
}
.view-h .thumb {
  grid-column: 2;
  background: linear-gradient(#c8d8fc, #c0d2fc 60%, #b0c6f4);
}
.view-h .thumb::after {
  width: 15px;
  height: 12px;
  background: repeating-linear-gradient(90deg, #eef4fe 0, #eef4fe 2px, #8cb0f8 2px, #8cb0f8 4px);
}

/* status bar */
.statusbar {
  flex: none;
  height: 38px;
  display: flex;
  align-items: center;
  padding-left: 7px;
  font-size: 19px;
}
.prompt {
  flex: 1;
}
.cell {
  height: 32px;
  padding-left: 10px;
  border-left: 2px solid #d0cdbb;
  line-height: 32px;
  white-space: nowrap;
}
.shape {
  width: 171px;
}
.layer-name {
  width: 97px;
  color: #e0785c;
}
.coords {
  width: 182px;
}
.unit {
  width: 46px;
}
.band {
  width: 55px;
}
.mode {
  width: 118px;
}
```
